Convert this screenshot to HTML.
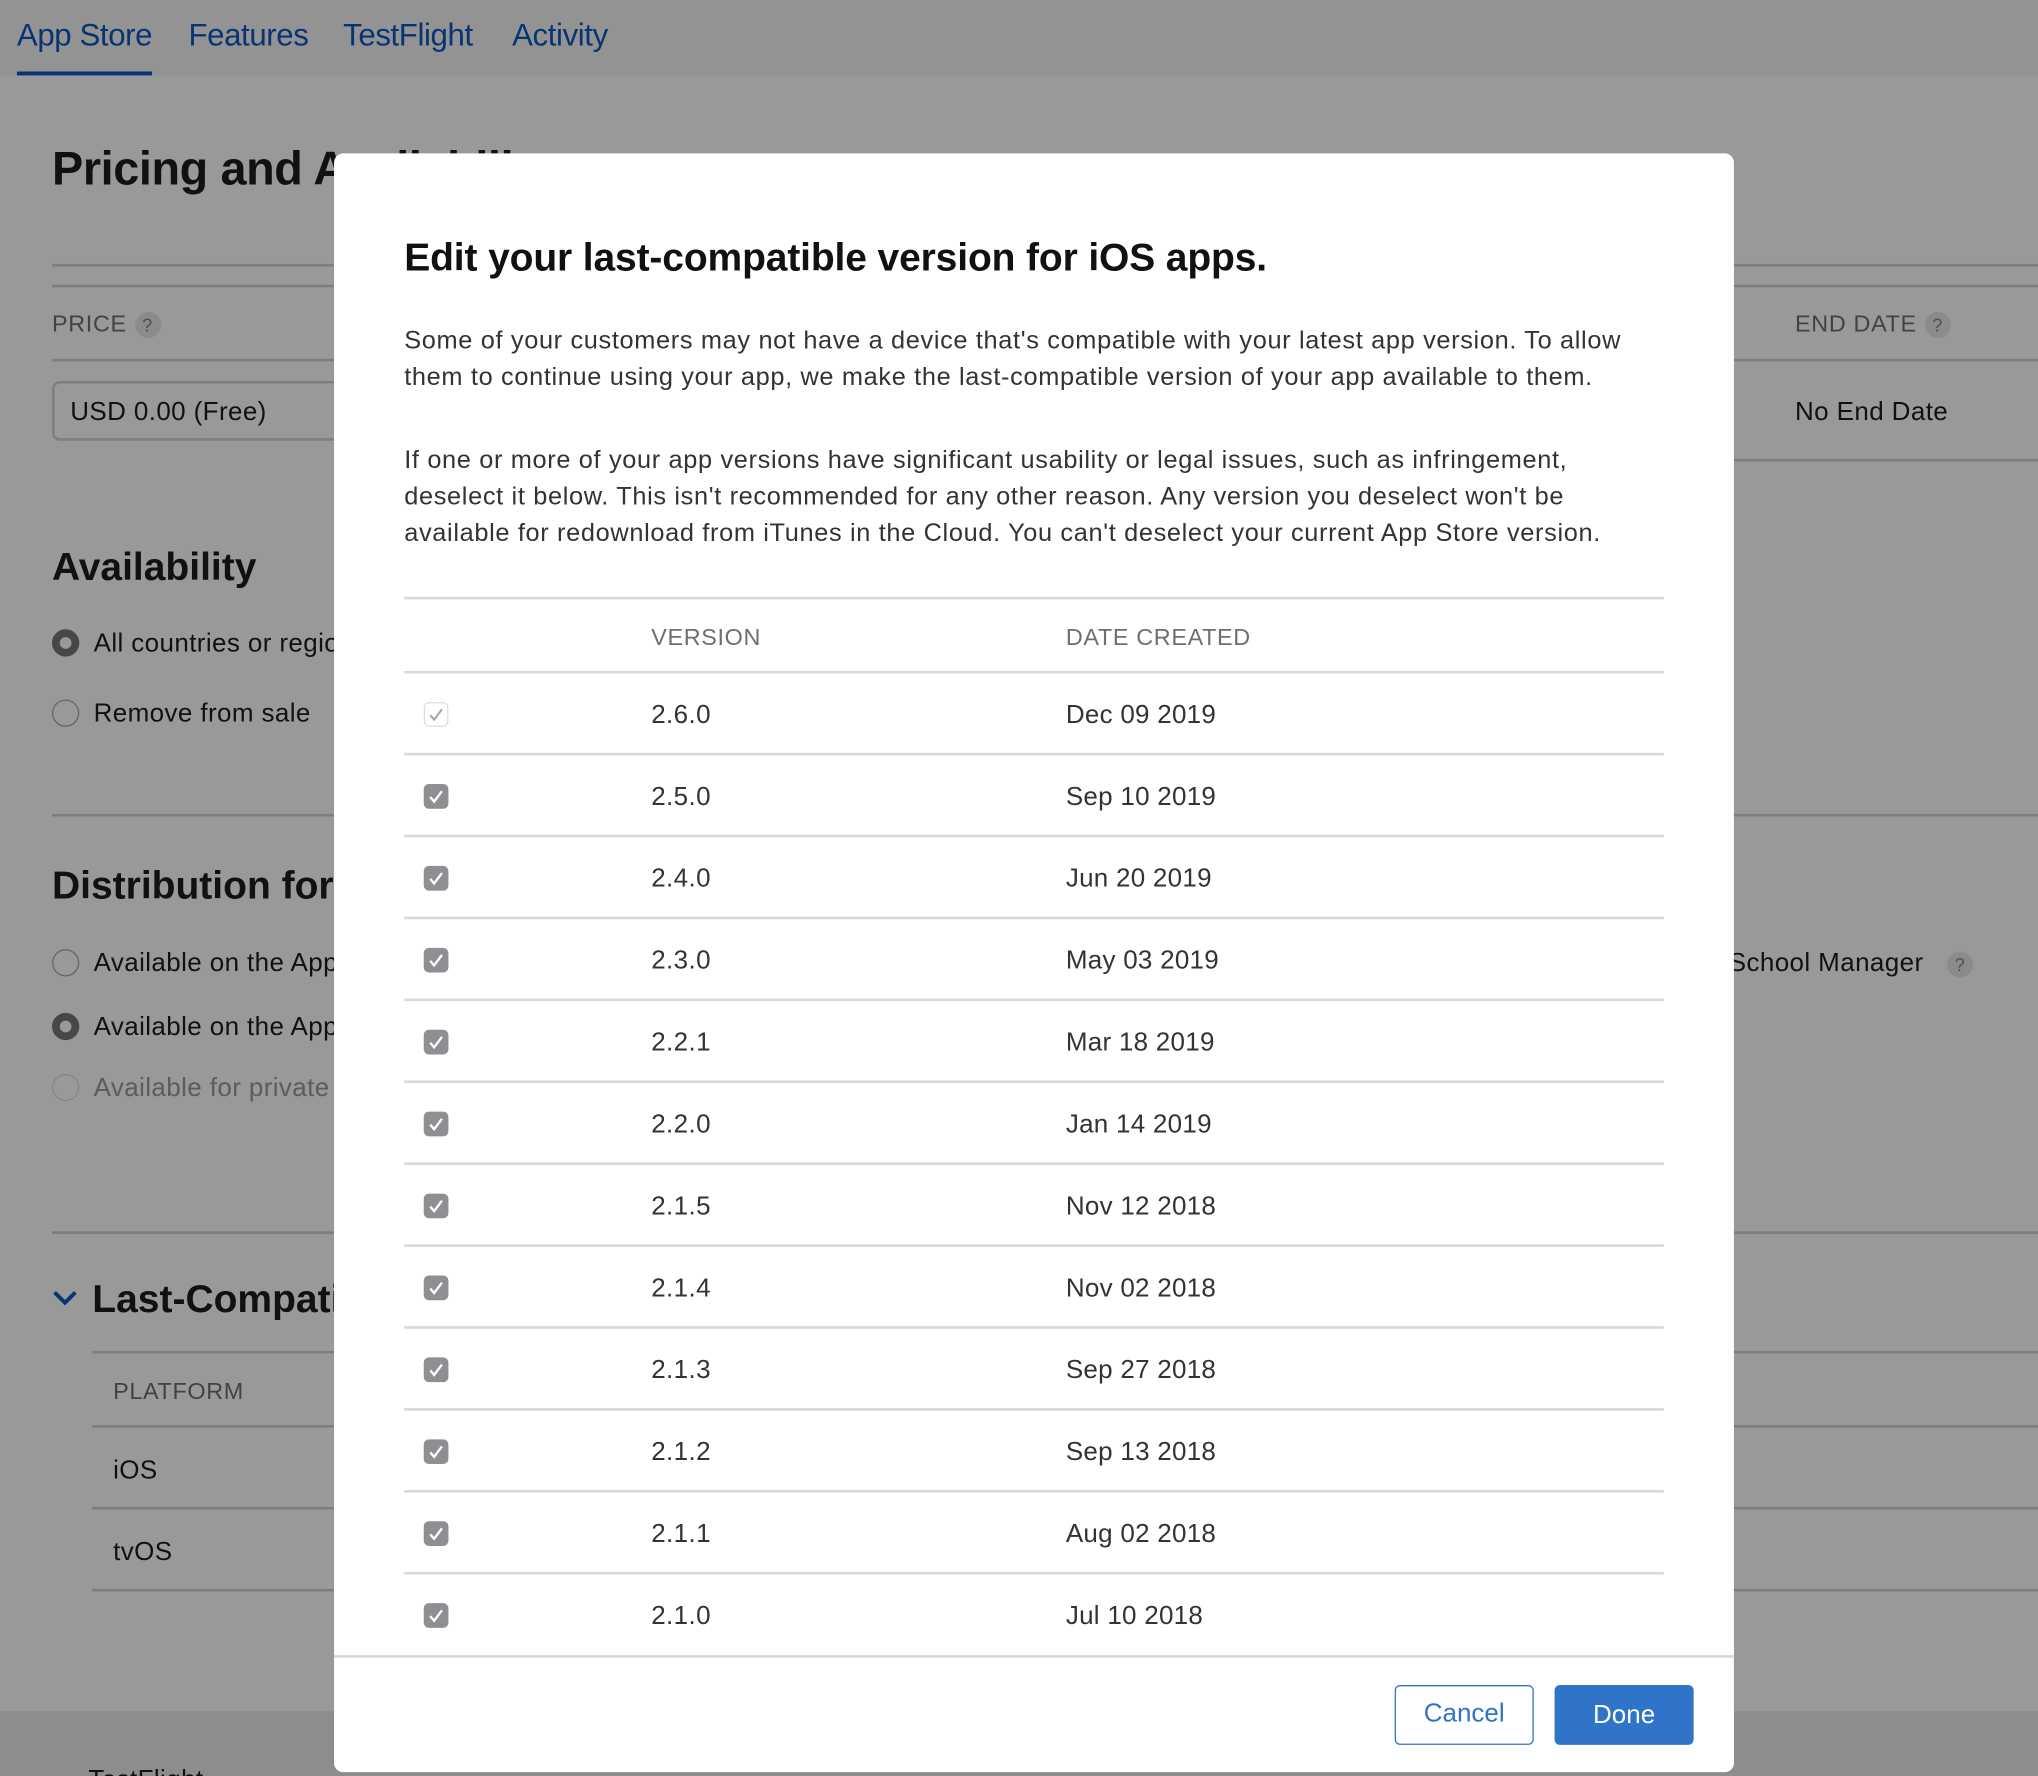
<!DOCTYPE html>
<html><head><meta charset="utf-8"><style>
*{margin:0;padding:0;box-sizing:border-box}
html,body{width:2038px;height:1776px;overflow:hidden;background:#fff}
#w{position:absolute;left:0;top:0;width:1568px;height:1366px;transform:scale(1.2998,1.3002);transform-origin:0 0;font-family:"Liberation Sans",sans-serif;background:#fff;overflow:hidden}
.a{position:absolute;white-space:nowrap}
.ln{position:absolute;height:2px;background:#d2d2d7}
.nav{position:absolute;left:0;top:0;width:1568px;height:58px;background:#f5f5f7}
.nav span{position:absolute;top:14px;font-size:24px;color:#0e57c0;letter-spacing:-.3px}
.h1{font-size:36px;font-weight:bold;color:#1d1d1f;letter-spacing:-.3px}
.h2{font-size:30px;font-weight:bold;color:#1d1d1f}
.lab{font-size:18px;color:#6e6e73;letter-spacing:.5px}
.t{font-size:20px;color:#1d1d1f;letter-spacing:.3px}
.q{display:inline-block;width:20px;height:20px;border-radius:50%;background:#e8e8ed;color:#86868b;font-size:14px;text-align:center;line-height:20px;vertical-align:middle;margin-left:6px}
.r{position:absolute;width:21px;height:21px;border-radius:50%;border:1.5px solid #aaa;background:#fff}
.r.on{border:6px solid #777}
#ov{position:absolute;left:0;top:0;width:1568px;height:1366px;background:rgba(0,0,0,.4)}
#m{position:absolute;left:257px;top:118px;width:1077px;height:1245px;background:#fff;border-radius:7px;overflow:hidden}
.p{position:absolute;left:54px;font-size:19.5px;line-height:28px;color:#333;white-space:nowrap;letter-spacing:.5px}
.row{position:absolute;left:54px;width:969px;height:63px;border-bottom:2px solid #d8d8d8}
.row .c{position:absolute;left:15px;top:22px;width:19px;height:19px;border-radius:4px;background:#8e8e93}
.row .c svg{position:absolute;left:3px;top:3px}
.row .v{position:absolute;left:190px;top:21px;font-size:20px;color:#333;letter-spacing:.3px}
.row .d{position:absolute;left:509px;top:21px;font-size:20px;color:#333;letter-spacing:.2px}
.btn{position:absolute;top:1178px;height:46px;border-radius:4px;font-size:20px;text-align:center;line-height:46px}
</style></head><body><div id="w">
<div class="nav"><span style="left:13px">App Store</span><span style="left:145px">Features</span><span style="left:264px">TestFlight</span><span style="left:394px">Activity</span>
<div style="position:absolute;left:13px;top:55px;width:104px;height:3px;background:#0e57c0"></div></div>
<div class="a h1" style="left:40px;top:109px">Pricing and Availability</div>
<div class="ln" style="left:40px;top:203px;width:1528px"></div>
<div class="ln" style="left:40px;top:219px;width:1528px"></div>
<div class="a lab" style="left:40px;top:239px">PRICE<span class="q">?</span></div>
<div class="a lab" style="left:1381px;top:239px">END DATE<span class="q">?</span></div>
<div class="ln" style="left:40px;top:276px;width:1528px"></div>
<div class="a" style="left:40px;top:293px;width:240px;height:46px;border:2px solid #d2d2d7;border-radius:6px"></div>
<div class="a t" style="left:54px;top:306px">USD 0.00 (Free)</div>
<div class="a t" style="left:1381px;top:306px">No End Date</div>
<div class="ln" style="left:1334px;top:353px;width:234px"></div>
<div class="a h2" style="left:40px;top:420px">Availability</div>
<div class="r on" style="left:40px;top:484px"></div><div class="a t" style="left:72px;top:484px">All countries or regions</div>
<div class="r" style="left:40px;top:538px"></div><div class="a t" style="left:72px;top:538px">Remove from sale</div>
<div class="ln" style="left:40px;top:626px;width:1528px"></div>
<div class="a h2" style="left:40px;top:665px">Distribution for</div>
<div class="r" style="left:40px;top:730px"></div><div class="a t" style="left:72px;top:730px">Available on the App Store</div>
<div class="r on" style="left:40px;top:779px"></div><div class="a t" style="left:72px;top:779px">Available on the App Store</div>
<div class="r" style="left:40px;top:826px;border-color:#ddd"></div><div class="a t" style="left:72px;top:826px;color:#999">Available for private</div>
<div class="a t" style="left:1330px;top:730px">School Manager<span class="q" style="margin-left:18px">?</span></div>
<div class="ln" style="left:40px;top:947px;width:1528px"></div>
<svg class="a" style="left:40px;top:990px" width="20" height="16"><path d="M2 4 L10 12 L18 4" fill="none" stroke="#0e57c0" stroke-width="3"/></svg>
<div class="a h2" style="left:71px;top:983px">Last-Compatible</div>
<div class="ln" style="left:71px;top:1039px;width:1497px"></div>
<div class="a lab" style="left:87px;top:1060px">PLATFORM</div>
<div class="ln" style="left:71px;top:1096px;width:1497px"></div>
<div class="a t" style="left:87px;top:1120px">iOS</div>
<div class="ln" style="left:71px;top:1159px;width:1497px"></div>
<div class="a t" style="left:87px;top:1183px">tvOS</div>
<div class="ln" style="left:71px;top:1222px;width:1497px"></div>
<div class="a" style="left:0;top:1316px;width:1568px;height:50px;background:#ececec"></div>
<div class="a t" style="left:68px;top:1358px">TestFlight</div>
<div id="ov"></div>
<div id="m">
<div class="a" style="left:54px;top:64px;font-size:30px;font-weight:bold;color:#111;letter-spacing:-.1px">Edit your last-compatible version for iOS apps.</div>
<div class="p" style="top:130px">Some of your customers may not have a device that's compatible with your latest app version. To allow<br>them to continue using your app, we make the last-compatible version of your app available to them.</div>
<div class="p" style="top:222px">If one or more of your app versions have significant usability or legal issues, such as infringement,<br>deselect it below. This isn't recommended for any other reason. Any version you deselect won't be<br>available for redownload from iTunes in the Cloud. You can't deselect your current App Store version.</div>
<div class="a" style="left:54px;top:341px;width:969px;height:2px;background:#d8d8d8"></div>
<div class="row" style="top:343px;height:57px"><div class="a lab" style="left:190px;top:19px">VERSION</div><div class="a lab" style="left:509px;top:19px">DATE CREATED</div></div>
<div class="row" style="top:400px"><div class="c" style="background:#fff;border:1px solid #ddd"><svg width="13" height="13" style="left:2px;top:2px"><path d="M2 7 L5 10.5 L11 2.5" fill="none" stroke="#aaa" stroke-width="1.6"/></svg></div><div class="v">2.6.0</div><div class="d">Dec 09 2019</div></div>
</div>
</div>
<script>
var m=document.getElementById('m');
var d=[["2.5.0","Sep 10 2019"],["2.4.0","Jun 20 2019"],["2.3.0","May 03 2019"],["2.2.1","Mar 18 2019"],["2.2.0","Jan 14 2019"],["2.1.5","Nov 12 2018"],["2.1.4","Nov 02 2018"],["2.1.3","Sep 27 2018"],["2.1.2","Sep 13 2018"],["2.1.1","Aug 02 2018"],["2.1.0","Jul 10 2018"]];
var h='';
d.forEach(function(r,i){var last=i==d.length-1;h+='<div class="row" style="top:'+(463+i*63)+'px;'+(last?'border-bottom:none':'')+'"><div class="c"><svg width="13" height="13"><path d="M2 7 L5 10.5 L11 2.5" fill="none" stroke="#fff" stroke-width="1.8"/></svg></div><div class="v">'+r[0]+'</div><div class="d">'+r[1]+'</div></div>';});
h+='<div class="a" style="left:0;top:1155px;width:1077px;height:2px;background:#d8d8d8"></div>';
h+='<div class="btn" style="left:816px;width:107px;border:1.5px solid #2f74c8;color:#2f74c8;line-height:43px">Cancel</div>';
h+='<div class="btn" style="left:939px;width:107px;background:#2f74c8;color:#fff">Done</div>';
m.insertAdjacentHTML('beforeend',h);
</script>
</body></html>
